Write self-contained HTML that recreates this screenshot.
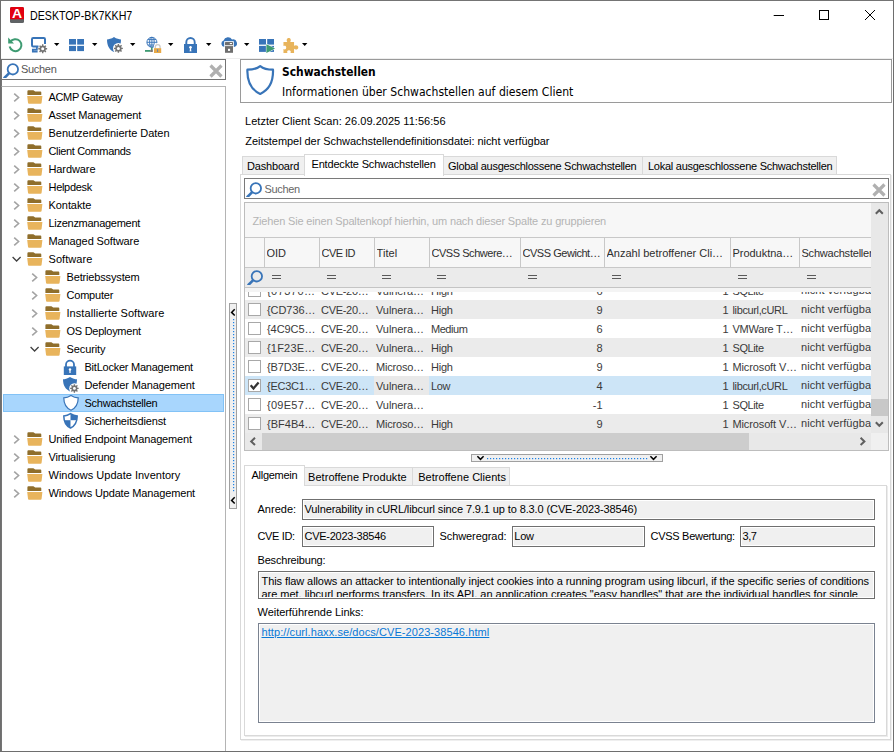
<!DOCTYPE html>
<html lang="de">
<head>
<meta charset="utf-8">
<title>DESKTOP-BK7KKH7</title>
<style>
*{box-sizing:border-box;margin:0;padding:0}
html,body{width:894px;height:752px;overflow:hidden;background:#fff}
body{font-family:"Liberation Sans","DejaVu Sans",sans-serif;font-size:11px;color:#000;position:relative}
.abs{position:absolute}
.t{position:absolute;white-space:nowrap;line-height:14px;height:14px}
#win{position:absolute;left:0;top:0;width:894px;height:752px;border:1px solid #6e6e6e;border-top-color:#747474;z-index:10;pointer-events:none}
svg{position:absolute;overflow:visible}
.t.c{color:#3a3a3a}
.fld{border:1px solid #6f6f6f;background:#f0f0f0;box-shadow:inset 0 0 0 1px #fff}
</style>
</head>
<body>
<div id="win"></div>

<!-- title bar -->
<svg style="left:10px;top:7px" width="14" height="16" viewBox="0 0 14 16">
  <rect x="0" y="0" width="14" height="15.9" rx="1.5" fill="#5f6365"/>
  <path d="M0 1.5A1.5 1.5 0 0 1 1.5 0H12.5A1.5 1.5 0 0 1 14 1.5V12.3H0Z" fill="#e2000f"/>
  <text x="7" y="11.2" transform="translate(7 0) scale(1.12 1) translate(-7 0)" font-family="Liberation Sans, sans-serif" font-weight="bold" font-size="12.5" text-anchor="middle" fill="#fff">A</text>
</svg>
<div class="t" id="title" style="left:30px;top:8px;font-size:12px;line-height:16px;height:16px;transform:scaleX(0.888);transform-origin:0 0">DESKTOP-BK7KKH7</div>
<svg style="left:773px;top:10px" width="110" height="12" viewBox="0 0 110 12" fill="none" stroke="#000" stroke-width="1">
  <path d="M0.7 5.5H11"/>
  <rect x="46.5" y="0.5" width="9" height="9"/>
  <path d="M92 0L102 10M102 0L92 10"/>
</svg>

<!-- toolbar -->
<div class="abs" style="left:1px;top:58px;width:892px;height:1px;background:#eeeeee"></div>
<svg style="left:7px;top:36.3px" width="17" height="17" viewBox="0 0 17 17" ><path d="M3.2 6.2A6 6 0 1 1 2.6 10.6" fill="none" stroke="#3e9b72" stroke-width="2"/><path d="M1.2 1.6V7.4H7Z" fill="#3e9b72"/></svg>
<svg style="left:31px;top:36px" width="18" height="18" viewBox="0 0 18 18" ><path d="M14 8V3.2A1.2 1.2 0 0 0 12.8 2H2.2A1.2 1.2 0 0 0 1 3.2V9.3A1.2 1.2 0 0 0 2.2 10.5H7.5" fill="none" stroke="#3874b8" stroke-width="2"/><path d="M5.9 10.5V13.6H1.8V15.7H6.6" fill="none" stroke="#3874b8" stroke-width="1.7"/><path d="M11.00 8.36L12.40 8.36L12.46 9.65L13.39 10.04L14.35 9.16L15.34 10.15L14.46 11.11L14.85 12.04L16.14 12.10L16.14 13.50L14.85 13.56L14.46 14.49L15.34 15.45L14.35 16.44L13.39 15.56L12.46 15.95L12.40 17.24L11.00 17.24L10.94 15.95L10.01 15.56L9.05 16.44L8.06 15.45L8.94 14.49L8.55 13.56L7.26 13.50L7.26 12.10L8.55 12.04L8.94 11.11L8.06 10.15L9.05 9.16L10.01 10.04L10.94 9.65Z" fill="#737373"/><circle cx="11.7" cy="12.8" r="1.5" fill="#fff"/></svg>
<svg style="left:53.8px;top:43px" width="6" height="4" viewBox="0 0 6 4" ><path d="M0 0H5.4L2.7 3.1Z" fill="#000"/></svg>
<svg style="left:69px;top:39px" width="16" height="14" viewBox="0 0 16 14" ><g fill="#3874b8"><rect x="0" y="0" width="7" height="5.6"/><rect x="8.2" y="0" width="6.8" height="5.6"/><rect x="0" y="6.9" width="7" height="5.2"/><rect x="8.2" y="6.9" width="6.8" height="5.2"/></g></svg>
<svg style="left:91.8px;top:43px" width="6" height="4" viewBox="0 0 6 4" ><path d="M0 0H5.4L2.7 3.1Z" fill="#000"/></svg>
<svg style="left:107px;top:37px" width="18" height="17" viewBox="0 0 18 17" ><path d="M7.0 0 C4.48 1.80 1.68 2.40 0 2.40 C0 9.30 2.80 12.90 7.0 15 C11.20 12.90 14 9.30 14 2.40 C12.32 2.40 9.52 1.80 7.0 0Z" fill="#3874b8"/><circle cx="11.4" cy="11.4" r="5.40" fill="#fff"/><path d="M10.70 6.96L12.10 6.96L12.16 8.25L13.09 8.64L14.05 7.76L15.04 8.75L14.16 9.71L14.55 10.64L15.84 10.70L15.84 12.10L14.55 12.16L14.16 13.09L15.04 14.05L14.05 15.04L13.09 14.16L12.16 14.55L12.10 15.84L10.70 15.84L10.64 14.55L9.71 14.16L8.75 15.04L7.76 14.05L8.64 13.09L8.25 12.16L6.96 12.10L6.96 10.70L8.25 10.64L8.64 9.71L7.76 8.75L8.75 7.76L9.71 8.64L10.64 8.25Z" fill="#737373"/><circle cx="11.4" cy="11.4" r="1.5" fill="#fff"/></svg>
<svg style="left:129.8px;top:43px" width="6" height="4" viewBox="0 0 6 4" ><path d="M0 0H5.4L2.7 3.1Z" fill="#000"/></svg>
<svg style="left:144px;top:36px" width="19" height="18" viewBox="0 0 19 18" ><g fill="none" stroke="#3874b8" stroke-width="0.95"><circle cx="7.9" cy="6.3" r="5"/><ellipse cx="7.9" cy="6.3" rx="2.3" ry="5"/><path d="M7.9 1.3V11.3M2.9 6.3H12.9M3.8 3.6H12M3.8 9H12"/></g><rect x="7" y="11.5" width="1.6" height="3" fill="#3e9b72"/><rect x="1" y="14" width="5.2" height="1.8" fill="#3e9b72"/><rect x="6.2" y="13.8" width="2.6" height="2.2" fill="#777"/><path d="M11.3 12.6V11A2.4 2.4 0 0 1 16.1 11V12.6" fill="none" stroke="#fff" stroke-width="3"/><path d="M11.3 12.6V11A2.4 2.4 0 0 1 16.1 11V12.6" fill="none" stroke="#c9c9c9" stroke-width="1.3"/><rect x="10" y="12.2" width="7.2" height="4.8" fill="#e8a947"/><rect x="13.2" y="13.2" width="0.9" height="2.8" fill="#5a7fb0"/></svg>
<svg style="left:167.8px;top:43px" width="6" height="4" viewBox="0 0 6 4" ><path d="M0 0H5.4L2.7 3.1Z" fill="#000"/></svg>
<svg style="left:184px;top:37px" width="14" height="17" viewBox="0 0 14 17" ><g transform="scale(1.0)"><path d="M2.3 8V5.2A4.2 4.2 0 0 1 10.7 5.2V8" fill="none" stroke="#3874b8" stroke-width="1.9"/><rect x="0" y="7" width="13" height="9" fill="#3874b8"/><circle cx="6.5" cy="10.3" r="1.25" fill="#fff"/><rect x="5.85" y="10.3" width="1.3" height="3.8" fill="#fff"/><path d="M5.3 14.2H7.7L6.5 12.8Z" fill="#fff"/></g></svg>
<svg style="left:205.8px;top:43px" width="6" height="4" viewBox="0 0 6 4" ><path d="M0 0H5.4L2.7 3.1Z" fill="#000"/></svg>
<svg style="left:220px;top:36px" width="19" height="18" viewBox="0 0 19 18" ><path d="M4.3 11A3.3 3.3 0 0 1 3.6 4.6A4.6 4.6 0 0 1 12 3.6A3.7 3.7 0 0 1 14.2 11Z" fill="#3874b8"/><rect x="4.2" y="5.2" width="9.6" height="12" fill="#fff"/><rect x="5" y="6" width="8" height="3.2" rx="0.5" fill="#6e6e6e"/><rect x="9.8" y="7" width="2.2" height="1.1" fill="#fff"/><rect x="5" y="10.1" width="8" height="6.7" fill="#6e6e6e"/><rect x="8" y="12.8" width="2.1" height="2.1" fill="#fff"/></svg>
<svg style="left:243.8px;top:43px" width="6" height="4" viewBox="0 0 6 4" ><path d="M0 0H5.4L2.7 3.1Z" fill="#000"/></svg>
<svg style="left:259px;top:39px" width="16" height="14" viewBox="0 0 16 14" ><g fill="#3874b8"><rect x="0" y="0" width="7" height="5.6"/><rect x="8.2" y="0" width="6.8" height="5.6"/><rect x="0" y="6.9" width="7" height="6"/><rect x="8.2" y="6.9" width="6.8" height="6"/></g></svg>
<svg style="left:266px;top:44px" width="10" height="10" viewBox="0 0 10 10" ><path d="M0.4 0.2L9 4.6L0.4 9Z" fill="#3e9b72" stroke="#fff" stroke-width="0.9" paint-order="stroke"/></svg>
<svg style="left:283px;top:37px" width="17" height="16" viewBox="0 0 17 16" ><path transform="translate(-0.6,0.2) scale(1.06)" d="M1 4.6H4.6C3.6 3 4 0.8 6 0.8C8 0.8 8.4 3 7.4 4.6H11V8.1C12.6 7.1 15 7.6 15 9.6C15 11.6 12.6 12 11 11V15H7.6C8.4 13.6 7.8 12.3 6.2 12.3C4.6 12.3 4 13.6 4.8 15H1V11.2C2.4 12 3.6 11.4 3.6 9.8C3.6 8.2 2.4 7.6 1 8.4Z" fill="#e8b45c"/></svg>
<svg style="left:301.7px;top:43px" width="6" height="4" viewBox="0 0 6 4" ><path d="M0 0H5.4L2.7 3.1Z" fill="#000"/></svg>

<!-- left search -->
<div class="abs" id="lsearch" style="left:1px;top:59px;width:225px;height:21px;border:1px solid #747474;background:#fff"></div>
<div class="t" style="left:21px;top:62px;color:#555;letter-spacing:-0.3px">Suchen</div>

<!-- tree -->
<div class="abs" id="treebox" style="left:1px;top:86px;width:225px;height:666px;border:1px solid #b4b4b4;border-left-color:#747474;border-bottom:none;background:#fff"></div>
<div class="abs" style="left:1px;top:80px;width:1px;height:6px;background:#747474"></div>
<svg style="left:13px;top:93px" width="8" height="9" viewBox="0 0 8 9" ><path d="M1.2 0.6L5.6 4.5L1.2 8.4" fill="none" stroke="#a3a3a3" stroke-width="1.6"/></svg>
<svg style="left:27px;top:90px" width="16" height="14" viewBox="0 0 16 14" ><path d="M0.4 1.2A1 1 0 0 1 1.4 0.2H6.4L8.2 1.6H13.4A0.9 0.9 0 0 1 14.3 2.5V5H0.4Z" fill="#8f6e2b"/><path d="M0.2 5.9H15.4L14.6 12.8A1 1 0 0 1 13.6 13.7H2A1 1 0 0 1 1 12.8Z" fill="#e8b45c"/></svg>
<div class="t" style="left:48.5px;top:90px;letter-spacing:-0.339px">ACMP Gateway</div>
<svg style="left:13px;top:111px" width="8" height="9" viewBox="0 0 8 9" ><path d="M1.2 0.6L5.6 4.5L1.2 8.4" fill="none" stroke="#a3a3a3" stroke-width="1.6"/></svg>
<svg style="left:27px;top:108px" width="16" height="14" viewBox="0 0 16 14" ><path d="M0.4 1.2A1 1 0 0 1 1.4 0.2H6.4L8.2 1.6H13.4A0.9 0.9 0 0 1 14.3 2.5V5H0.4Z" fill="#8f6e2b"/><path d="M0.2 5.9H15.4L14.6 12.8A1 1 0 0 1 13.6 13.7H2A1 1 0 0 1 1 12.8Z" fill="#e8b45c"/></svg>
<div class="t" style="left:48.5px;top:108px;letter-spacing:-0.136px">Asset Management</div>
<svg style="left:13px;top:129px" width="8" height="9" viewBox="0 0 8 9" ><path d="M1.2 0.6L5.6 4.5L1.2 8.4" fill="none" stroke="#a3a3a3" stroke-width="1.6"/></svg>
<svg style="left:27px;top:126px" width="16" height="14" viewBox="0 0 16 14" ><path d="M0.4 1.2A1 1 0 0 1 1.4 0.2H6.4L8.2 1.6H13.4A0.9 0.9 0 0 1 14.3 2.5V5H0.4Z" fill="#8f6e2b"/><path d="M0.2 5.9H15.4L14.6 12.8A1 1 0 0 1 13.6 13.7H2A1 1 0 0 1 1 12.8Z" fill="#e8b45c"/></svg>
<div class="t" style="left:48.5px;top:126px;letter-spacing:-0.029px">Benutzerdefinierte Daten</div>
<svg style="left:13px;top:147px" width="8" height="9" viewBox="0 0 8 9" ><path d="M1.2 0.6L5.6 4.5L1.2 8.4" fill="none" stroke="#a3a3a3" stroke-width="1.6"/></svg>
<svg style="left:27px;top:144px" width="16" height="14" viewBox="0 0 16 14" ><path d="M0.4 1.2A1 1 0 0 1 1.4 0.2H6.4L8.2 1.6H13.4A0.9 0.9 0 0 1 14.3 2.5V5H0.4Z" fill="#8f6e2b"/><path d="M0.2 5.9H15.4L14.6 12.8A1 1 0 0 1 13.6 13.7H2A1 1 0 0 1 1 12.8Z" fill="#e8b45c"/></svg>
<div class="t" style="left:48.5px;top:144px;letter-spacing:-0.355px">Client Commands</div>
<svg style="left:13px;top:165px" width="8" height="9" viewBox="0 0 8 9" ><path d="M1.2 0.6L5.6 4.5L1.2 8.4" fill="none" stroke="#a3a3a3" stroke-width="1.6"/></svg>
<svg style="left:27px;top:162px" width="16" height="14" viewBox="0 0 16 14" ><path d="M0.4 1.2A1 1 0 0 1 1.4 0.2H6.4L8.2 1.6H13.4A0.9 0.9 0 0 1 14.3 2.5V5H0.4Z" fill="#8f6e2b"/><path d="M0.2 5.9H15.4L14.6 12.8A1 1 0 0 1 13.6 13.7H2A1 1 0 0 1 1 12.8Z" fill="#e8b45c"/></svg>
<div class="t" style="left:48.5px;top:162px;letter-spacing:-0.098px">Hardware</div>
<svg style="left:13px;top:183px" width="8" height="9" viewBox="0 0 8 9" ><path d="M1.2 0.6L5.6 4.5L1.2 8.4" fill="none" stroke="#a3a3a3" stroke-width="1.6"/></svg>
<svg style="left:27px;top:180px" width="16" height="14" viewBox="0 0 16 14" ><path d="M0.4 1.2A1 1 0 0 1 1.4 0.2H6.4L8.2 1.6H13.4A0.9 0.9 0 0 1 14.3 2.5V5H0.4Z" fill="#8f6e2b"/><path d="M0.2 5.9H15.4L14.6 12.8A1 1 0 0 1 13.6 13.7H2A1 1 0 0 1 1 12.8Z" fill="#e8b45c"/></svg>
<div class="t" style="left:48.5px;top:180px;letter-spacing:-0.307px">Helpdesk</div>
<svg style="left:13px;top:201px" width="8" height="9" viewBox="0 0 8 9" ><path d="M1.2 0.6L5.6 4.5L1.2 8.4" fill="none" stroke="#a3a3a3" stroke-width="1.6"/></svg>
<svg style="left:27px;top:198px" width="16" height="14" viewBox="0 0 16 14" ><path d="M0.4 1.2A1 1 0 0 1 1.4 0.2H6.4L8.2 1.6H13.4A0.9 0.9 0 0 1 14.3 2.5V5H0.4Z" fill="#8f6e2b"/><path d="M0.2 5.9H15.4L14.6 12.8A1 1 0 0 1 13.6 13.7H2A1 1 0 0 1 1 12.8Z" fill="#e8b45c"/></svg>
<div class="t" style="left:48.5px;top:198px;letter-spacing:-0.065px">Kontakte</div>
<svg style="left:13px;top:219px" width="8" height="9" viewBox="0 0 8 9" ><path d="M1.2 0.6L5.6 4.5L1.2 8.4" fill="none" stroke="#a3a3a3" stroke-width="1.6"/></svg>
<svg style="left:27px;top:216px" width="16" height="14" viewBox="0 0 16 14" ><path d="M0.4 1.2A1 1 0 0 1 1.4 0.2H6.4L8.2 1.6H13.4A0.9 0.9 0 0 1 14.3 2.5V5H0.4Z" fill="#8f6e2b"/><path d="M0.2 5.9H15.4L14.6 12.8A1 1 0 0 1 13.6 13.7H2A1 1 0 0 1 1 12.8Z" fill="#e8b45c"/></svg>
<div class="t" style="left:48.5px;top:216px;letter-spacing:-0.282px">Lizenzmanagement</div>
<svg style="left:13px;top:237px" width="8" height="9" viewBox="0 0 8 9" ><path d="M1.2 0.6L5.6 4.5L1.2 8.4" fill="none" stroke="#a3a3a3" stroke-width="1.6"/></svg>
<svg style="left:27px;top:234px" width="16" height="14" viewBox="0 0 16 14" ><path d="M0.4 1.2A1 1 0 0 1 1.4 0.2H6.4L8.2 1.6H13.4A0.9 0.9 0 0 1 14.3 2.5V5H0.4Z" fill="#8f6e2b"/><path d="M0.2 5.9H15.4L14.6 12.8A1 1 0 0 1 13.6 13.7H2A1 1 0 0 1 1 12.8Z" fill="#e8b45c"/></svg>
<div class="t" style="left:48.5px;top:234px;letter-spacing:-0.103px">Managed Software</div>
<svg style="left:12px;top:256px" width="10" height="7" viewBox="0 0 10 7" ><path d="M0.6 1L4.6 5L8.6 1" fill="none" stroke="#404040" stroke-width="1.3"/></svg>
<svg style="left:27px;top:252px" width="16" height="14" viewBox="0 0 16 14" ><path d="M0.4 1.2A1 1 0 0 1 1.4 0.2H6.4L8.2 1.6H13.4A0.9 0.9 0 0 1 14.3 2.5V5H0.4Z" fill="#8f6e2b"/><path d="M0.2 5.9H15.4L14.6 12.8A1 1 0 0 1 13.6 13.7H2A1 1 0 0 1 1 12.8Z" fill="#e8b45c"/></svg>
<div class="t" style="left:48.5px;top:252px;letter-spacing:0.072px">Software</div>
<svg style="left:31px;top:273px" width="8" height="9" viewBox="0 0 8 9" ><path d="M1.2 0.6L5.6 4.5L1.2 8.4" fill="none" stroke="#a3a3a3" stroke-width="1.6"/></svg>
<svg style="left:45px;top:270px" width="16" height="14" viewBox="0 0 16 14" ><path d="M0.4 1.2A1 1 0 0 1 1.4 0.2H6.4L8.2 1.6H13.4A0.9 0.9 0 0 1 14.3 2.5V5H0.4Z" fill="#8f6e2b"/><path d="M0.2 5.9H15.4L14.6 12.8A1 1 0 0 1 13.6 13.7H2A1 1 0 0 1 1 12.8Z" fill="#e8b45c"/></svg>
<div class="t" style="left:66.5px;top:270px;letter-spacing:-0.157px">Betriebssystem</div>
<svg style="left:31px;top:291px" width="8" height="9" viewBox="0 0 8 9" ><path d="M1.2 0.6L5.6 4.5L1.2 8.4" fill="none" stroke="#a3a3a3" stroke-width="1.6"/></svg>
<svg style="left:45px;top:288px" width="16" height="14" viewBox="0 0 16 14" ><path d="M0.4 1.2A1 1 0 0 1 1.4 0.2H6.4L8.2 1.6H13.4A0.9 0.9 0 0 1 14.3 2.5V5H0.4Z" fill="#8f6e2b"/><path d="M0.2 5.9H15.4L14.6 12.8A1 1 0 0 1 13.6 13.7H2A1 1 0 0 1 1 12.8Z" fill="#e8b45c"/></svg>
<div class="t" style="left:66.5px;top:288px;letter-spacing:-0.2px">Computer</div>
<svg style="left:31px;top:309px" width="8" height="9" viewBox="0 0 8 9" ><path d="M1.2 0.6L5.6 4.5L1.2 8.4" fill="none" stroke="#a3a3a3" stroke-width="1.6"/></svg>
<svg style="left:45px;top:306px" width="16" height="14" viewBox="0 0 16 14" ><path d="M0.4 1.2A1 1 0 0 1 1.4 0.2H6.4L8.2 1.6H13.4A0.9 0.9 0 0 1 14.3 2.5V5H0.4Z" fill="#8f6e2b"/><path d="M0.2 5.9H15.4L14.6 12.8A1 1 0 0 1 13.6 13.7H2A1 1 0 0 1 1 12.8Z" fill="#e8b45c"/></svg>
<div class="t" style="left:66.5px;top:306px;letter-spacing:0.061px">Installierte Software</div>
<svg style="left:31px;top:327px" width="8" height="9" viewBox="0 0 8 9" ><path d="M1.2 0.6L5.6 4.5L1.2 8.4" fill="none" stroke="#a3a3a3" stroke-width="1.6"/></svg>
<svg style="left:45px;top:324px" width="16" height="14" viewBox="0 0 16 14" ><path d="M0.4 1.2A1 1 0 0 1 1.4 0.2H6.4L8.2 1.6H13.4A0.9 0.9 0 0 1 14.3 2.5V5H0.4Z" fill="#8f6e2b"/><path d="M0.2 5.9H15.4L14.6 12.8A1 1 0 0 1 13.6 13.7H2A1 1 0 0 1 1 12.8Z" fill="#e8b45c"/></svg>
<div class="t" style="left:66.5px;top:324px;letter-spacing:-0.258px">OS Deployment</div>
<svg style="left:30px;top:346px" width="10" height="7" viewBox="0 0 10 7" ><path d="M0.6 1L4.6 5L8.6 1" fill="none" stroke="#404040" stroke-width="1.3"/></svg>
<svg style="left:45px;top:342px" width="16" height="14" viewBox="0 0 16 14" ><path d="M0.4 1.2A1 1 0 0 1 1.4 0.2H6.4L8.2 1.6H13.4A0.9 0.9 0 0 1 14.3 2.5V5H0.4Z" fill="#8f6e2b"/><path d="M0.2 5.9H15.4L14.6 12.8A1 1 0 0 1 13.6 13.7H2A1 1 0 0 1 1 12.8Z" fill="#e8b45c"/></svg>
<div class="t" style="left:66.5px;top:342px;letter-spacing:-0.106px">Security</div>
<svg style="left:63px;top:359px" width="15" height="17" viewBox="0 0 15 17" ><path d="M3 8V5.6A4 4 0 0 1 11 5.6V8" fill="none" stroke="#3874b8" stroke-width="1.8"/><rect x="0.8" y="7.4" width="12.4" height="8.6" fill="#3874b8"/><circle cx="7" cy="10.4" r="1.2" fill="#fff"/><rect x="6.4" y="10.4" width="1.2" height="3.6" fill="#fff"/></svg>
<div class="t" style="left:84.5px;top:360px;letter-spacing:-0.236px">BitLocker Management</div>
<svg style="left:63px;top:377px" width="17" height="17" viewBox="0 0 17 17" ><path d="M7.0 0 C4.48 1.74 1.68 2.32 0 2.32 C0 8.99 2.80 12.47 7.0 14.5 C11.20 12.47 14 8.99 14 2.32 C12.32 2.32 9.52 1.74 7.0 0Z" fill="#3874b8"/><circle cx="11.4" cy="11.4" r="5.20" fill="#fff"/><path d="M10.73 7.15L12.07 7.15L12.12 8.39L13.02 8.76L13.93 7.92L14.88 8.87L14.04 9.78L14.41 10.68L15.65 10.73L15.65 12.07L14.41 12.12L14.04 13.02L14.88 13.93L13.93 14.88L13.02 14.04L12.12 14.41L12.07 15.65L10.73 15.65L10.68 14.41L9.78 14.04L8.87 14.88L7.92 13.93L8.76 13.02L8.39 12.12L7.15 12.07L7.15 10.73L8.39 10.68L8.76 9.78L7.92 8.87L8.87 7.92L9.78 8.76L10.68 8.39Z" fill="#737373"/><circle cx="11.4" cy="11.4" r="1.4" fill="#fff"/></svg>
<div class="t" style="left:84.5px;top:378px;letter-spacing:-0.117px">Defender Management</div>
<div class="abs" style="left:3px;top:394px;width:221px;height:18px;background:#a8d6fd;border:1px solid #82c2f6"></div>
<svg style="left:63px;top:395px" width="16" height="16" viewBox="0 0 16 16" ><path d="M8.0 0.6 C5.41 2.35 2.53 2.94 0.8 2.94 C0.8 9.65 3.68 13.16 8.0 15.2 C12.32 13.16 15.200000000000001 9.65 15.200000000000001 2.94 C13.47 2.94 10.59 2.35 8.0 0.6Z" fill="#fff" stroke="#3874b8" stroke-width="1.2"/></svg>
<div class="t" style="left:84.5px;top:396px;letter-spacing:-0.253px">Schwachstellen</div>
<svg style="left:63px;top:413px" width="16" height="16" viewBox="0 0 16 16" ><clipPath id="svc"><path d="M7.5 0.6 C5.09 2.33 2.41 2.90 0.8 2.90 C0.8 9.53 3.48 12.98 7.5 15.0 C11.52 12.98 14.200000000000001 9.53 14.200000000000001 2.90 C12.59 2.90 9.91 2.33 7.5 0.6Z"/></clipPath><path d="M7.5 0.6 C5.09 2.33 2.41 2.90 0.8 2.90 C0.8 9.53 3.48 12.98 7.5 15.0 C11.52 12.98 14.200000000000001 9.53 14.200000000000001 2.90 C12.59 2.90 9.91 2.33 7.5 0.6Z" fill="#fff" stroke="#3874b8" stroke-width="1.5"/><g clip-path="url(#svc)" fill="#3874b8"><rect x="7.5" y="0" width="8" height="7.2"/><rect x="0" y="7.2" width="7.5" height="9"/></g></svg>
<div class="t" style="left:84.5px;top:414px;letter-spacing:-0.134px">Sicherheitsdienst</div>
<svg style="left:13px;top:435px" width="8" height="9" viewBox="0 0 8 9" ><path d="M1.2 0.6L5.6 4.5L1.2 8.4" fill="none" stroke="#a3a3a3" stroke-width="1.6"/></svg>
<svg style="left:27px;top:432px" width="16" height="14" viewBox="0 0 16 14" ><path d="M0.4 1.2A1 1 0 0 1 1.4 0.2H6.4L8.2 1.6H13.4A0.9 0.9 0 0 1 14.3 2.5V5H0.4Z" fill="#8f6e2b"/><path d="M0.2 5.9H15.4L14.6 12.8A1 1 0 0 1 13.6 13.7H2A1 1 0 0 1 1 12.8Z" fill="#e8b45c"/></svg>
<div class="t" style="left:48.5px;top:432px;letter-spacing:-0.173px">Unified Endpoint Management</div>
<svg style="left:13px;top:453px" width="8" height="9" viewBox="0 0 8 9" ><path d="M1.2 0.6L5.6 4.5L1.2 8.4" fill="none" stroke="#a3a3a3" stroke-width="1.6"/></svg>
<svg style="left:27px;top:450px" width="16" height="14" viewBox="0 0 16 14" ><path d="M0.4 1.2A1 1 0 0 1 1.4 0.2H6.4L8.2 1.6H13.4A0.9 0.9 0 0 1 14.3 2.5V5H0.4Z" fill="#8f6e2b"/><path d="M0.2 5.9H15.4L14.6 12.8A1 1 0 0 1 13.6 13.7H2A1 1 0 0 1 1 12.8Z" fill="#e8b45c"/></svg>
<div class="t" style="left:48.5px;top:450px;letter-spacing:-0.181px">Virtualisierung</div>
<svg style="left:13px;top:471px" width="8" height="9" viewBox="0 0 8 9" ><path d="M1.2 0.6L5.6 4.5L1.2 8.4" fill="none" stroke="#a3a3a3" stroke-width="1.6"/></svg>
<svg style="left:27px;top:468px" width="16" height="14" viewBox="0 0 16 14" ><path d="M0.4 1.2A1 1 0 0 1 1.4 0.2H6.4L8.2 1.6H13.4A0.9 0.9 0 0 1 14.3 2.5V5H0.4Z" fill="#8f6e2b"/><path d="M0.2 5.9H15.4L14.6 12.8A1 1 0 0 1 13.6 13.7H2A1 1 0 0 1 1 12.8Z" fill="#e8b45c"/></svg>
<div class="t" style="left:48.5px;top:468px;letter-spacing:0.014px">Windows Update Inventory</div>
<svg style="left:13px;top:489px" width="8" height="9" viewBox="0 0 8 9" ><path d="M1.2 0.6L5.6 4.5L1.2 8.4" fill="none" stroke="#a3a3a3" stroke-width="1.6"/></svg>
<svg style="left:27px;top:486px" width="16" height="14" viewBox="0 0 16 14" ><path d="M0.4 1.2A1 1 0 0 1 1.4 0.2H6.4L8.2 1.6H13.4A0.9 0.9 0 0 1 14.3 2.5V5H0.4Z" fill="#8f6e2b"/><path d="M0.2 5.9H15.4L14.6 12.8A1 1 0 0 1 13.6 13.7H2A1 1 0 0 1 1 12.8Z" fill="#e8b45c"/></svg>
<div class="t" style="left:48.5px;top:486px;letter-spacing:-0.157px">Windows Update Management</div>

<!-- right -->
<svg style="left:3px;top:63px" width="17" height="16" viewBox="0 0 17 16" ><g transform="scale(1.0)"><circle cx="9.85" cy="6.3" r="5.2" fill="none" stroke="#3874b8" stroke-width="1.8"/><path d="M5.3 9.3L7.1 11.1L3.2 14.9H0.2V14.2Z" fill="#3874b8"/></g></svg>
<svg style="left:209.1px;top:64px" width="14" height="14" viewBox="0 0 14 14" ><path d="M1.5 1.5L12.5 12.5M12.5 1.5L1.5 12.5" stroke="#b0b0b0" stroke-width="3.2"/></svg>
<div class="abs" style="left:229px;top:303px;width:8px;height:206px;border:1px solid #a0a0a0;background:#f0f0f0"></div>
<svg style="left:232.8px;top:318.9px" width="2" height="175" viewBox="0 0 2 175" ><g fill="#1e82e6"><rect x="0" y="0" width="1.2" height="1.2"/><rect x="0" y="3" width="1.2" height="1.2"/><rect x="0" y="6" width="1.2" height="1.2"/><rect x="0" y="9" width="1.2" height="1.2"/><rect x="0" y="12" width="1.2" height="1.2"/><rect x="0" y="15" width="1.2" height="1.2"/><rect x="0" y="18" width="1.2" height="1.2"/><rect x="0" y="21" width="1.2" height="1.2"/><rect x="0" y="24" width="1.2" height="1.2"/><rect x="0" y="27" width="1.2" height="1.2"/><rect x="0" y="30" width="1.2" height="1.2"/><rect x="0" y="33" width="1.2" height="1.2"/><rect x="0" y="36" width="1.2" height="1.2"/><rect x="0" y="39" width="1.2" height="1.2"/><rect x="0" y="42" width="1.2" height="1.2"/><rect x="0" y="45" width="1.2" height="1.2"/><rect x="0" y="48" width="1.2" height="1.2"/><rect x="0" y="51" width="1.2" height="1.2"/><rect x="0" y="54" width="1.2" height="1.2"/><rect x="0" y="57" width="1.2" height="1.2"/><rect x="0" y="60" width="1.2" height="1.2"/><rect x="0" y="63" width="1.2" height="1.2"/><rect x="0" y="66" width="1.2" height="1.2"/><rect x="0" y="69" width="1.2" height="1.2"/><rect x="0" y="72" width="1.2" height="1.2"/><rect x="0" y="75" width="1.2" height="1.2"/><rect x="0" y="78" width="1.2" height="1.2"/><rect x="0" y="81" width="1.2" height="1.2"/><rect x="0" y="84" width="1.2" height="1.2"/><rect x="0" y="87" width="1.2" height="1.2"/><rect x="0" y="90" width="1.2" height="1.2"/><rect x="0" y="93" width="1.2" height="1.2"/><rect x="0" y="96" width="1.2" height="1.2"/><rect x="0" y="99" width="1.2" height="1.2"/><rect x="0" y="102" width="1.2" height="1.2"/><rect x="0" y="105" width="1.2" height="1.2"/><rect x="0" y="108" width="1.2" height="1.2"/><rect x="0" y="111" width="1.2" height="1.2"/><rect x="0" y="114" width="1.2" height="1.2"/><rect x="0" y="117" width="1.2" height="1.2"/><rect x="0" y="120" width="1.2" height="1.2"/><rect x="0" y="123" width="1.2" height="1.2"/><rect x="0" y="126" width="1.2" height="1.2"/><rect x="0" y="129" width="1.2" height="1.2"/><rect x="0" y="132" width="1.2" height="1.2"/><rect x="0" y="135" width="1.2" height="1.2"/><rect x="0" y="138" width="1.2" height="1.2"/><rect x="0" y="141" width="1.2" height="1.2"/><rect x="0" y="144" width="1.2" height="1.2"/><rect x="0" y="147" width="1.2" height="1.2"/><rect x="0" y="150" width="1.2" height="1.2"/><rect x="0" y="153" width="1.2" height="1.2"/><rect x="0" y="156" width="1.2" height="1.2"/><rect x="0" y="159" width="1.2" height="1.2"/><rect x="0" y="162" width="1.2" height="1.2"/><rect x="0" y="165" width="1.2" height="1.2"/><rect x="0" y="168" width="1.2" height="1.2"/><rect x="0" y="171" width="1.2" height="1.2"/></g></svg>
<svg style="left:230px;top:308px" width="6" height="9" viewBox="0 0 6 9" ><path d="M4.7 1.3L1.6 4.4L4.7 7.5" fill="none" stroke="#000" stroke-width="1.5"/></svg>
<svg style="left:230px;top:496px" width="6" height="9" viewBox="0 0 6 9" ><path d="M4.7 1.3L1.6 4.4L4.7 7.5" fill="none" stroke="#000" stroke-width="1.5"/></svg>
<div class="abs" style="left:240px;top:59px;width:652px;height:44px;border:1px solid #9a9a9a;background:#fff"></div>
<svg style="left:246px;top:64px" width="29" height="32" viewBox="0 0 29 32" ><path d="M14.2 2.1C11.6 4.2 7.6 5.7 1.4 5.7C1 17 4.5 25.5 14.2 29.9C23.9 25.5 27.4 17 27 5.7C20.8 5.7 16.8 4.2 14.2 2.1Z" fill="none" stroke="#3874b8" stroke-width="2.2" stroke-linejoin="round"/></svg>
<div class="t" style="left:282px;top:65px;font:bold 12px 'DejaVu Sans','Liberation Sans',sans-serif;line-height:14px;transform:scaleX(0.8917);transform-origin:0 0">Schwachstellen</div>
<div class="t" style="left:282px;top:85px;font:12px 'DejaVu Sans','Liberation Sans',sans-serif;line-height:14px;transform:scaleX(0.9051);transform-origin:0 0">Informationen über Schwachstellen auf diesem Client</div>
<div class="t" style="left:245px;top:114px;;letter-spacing:0.038px">Letzter Client Scan: 26.09.2025 11:56:56</div>
<div class="t" style="left:245.3px;top:134px;;letter-spacing:-0.055px">Zeitstempel der Schwachstellendefinitionsdatei: nicht verfügbar</div>
<div class="abs" style="left:240px;top:174px;width:651px;height:566px;border:1px solid #d9d9d9;background:#fff;box-shadow:1px 1px 0 #efefef"></div>
<div class="abs" style="left:242px;top:156px;width:63px;height:19px;border:1px solid #d9d9d9;background:#f0f0f0"></div><div class="t" style="left:247px;top:159px;;letter-spacing:-0.181px">Dashboard</div>
<div class="abs" style="left:443px;top:156px;width:200px;height:19px;border:1px solid #d9d9d9;background:#f0f0f0"></div><div class="t" style="left:448px;top:159px;;letter-spacing:-0.296px">Global ausgeschlossene Schwachstellen</div>
<div class="abs" style="left:642px;top:156px;width:195px;height:19px;border:1px solid #d9d9d9;background:#f0f0f0"></div><div class="t" style="left:648px;top:159px;;letter-spacing:-0.262px">Lokal ausgeschlossene Schwachstellen</div>
<div class="abs" style="left:304px;top:154px;width:140px;height:22px;border:1px solid #d9d9d9;border-bottom:none;background:#fff"></div><div class="t" style="left:311.5px;top:157px;;letter-spacing:-0.18px">Entdeckte Schwachstellen</div>
<div class="abs" style="left:244px;top:178px;width:645px;height:21px;border:1px solid #7a7a7a;background:#fff"></div>
<svg style="left:246px;top:182px" width="17" height="16" viewBox="0 0 17 16" ><g transform="scale(1.0)"><circle cx="9.85" cy="6.3" r="5.2" fill="none" stroke="#3874b8" stroke-width="1.8"/><path d="M5.3 9.3L7.1 11.1L3.2 14.9H0.2V14.2Z" fill="#3874b8"/></g></svg>
<div class="t" style="left:264.5px;top:182px;color:#666;letter-spacing:-0.352px">Suchen</div>
<svg style="left:871.9px;top:182.9px" width="14" height="14" viewBox="0 0 14 14" ><path d="M1.5 1.5L12.5 12.5M12.5 1.5L1.5 12.5" stroke="#b0b0b0" stroke-width="3.2"/></svg>
<div class="abs" style="left:244px;top:202px;width:645px;height:249px;border:1px solid #bdbdbd;background:#fff"></div>
<div class="abs" style="left:245px;top:203px;width:626px;height:34px;background:#f7f7f7"></div>
<div class="t" style="left:252.5px;top:214px;color:#b4b4b4;letter-spacing:-0.166px">Ziehen Sie einen Spaltenkopf hierhin, um nach dieser Spalte zu gruppieren</div>
<div class="abs" style="left:245px;top:237px;width:626px;height:31px;background:#f7f7f7;border-top:1px solid #c8c8c8;border-bottom:1px solid #c8c8c8"></div>
<div class="abs" style="left:264px;top:238px;width:1px;height:29px;background:#c8c8c8"></div>
<div class="abs" style="left:319px;top:238px;width:1px;height:29px;background:#c8c8c8"></div>
<div class="abs" style="left:374px;top:238px;width:1px;height:29px;background:#c8c8c8"></div>
<div class="abs" style="left:429px;top:238px;width:1px;height:29px;background:#c8c8c8"></div>
<div class="abs" style="left:520px;top:238px;width:1px;height:29px;background:#c8c8c8"></div>
<div class="abs" style="left:604px;top:238px;width:1px;height:29px;background:#c8c8c8"></div>
<div class="abs" style="left:730px;top:238px;width:1px;height:29px;background:#c8c8c8"></div>
<div class="abs" style="left:799px;top:238px;width:1px;height:29px;background:#c8c8c8"></div>
<div class="t" style="left:266.5px;top:246px;width:52.5px;overflow:hidden;color:#2e2e2e;letter-spacing:-0.088px">OID</div>
<div class="t" style="left:321.5px;top:246px;width:52.5px;overflow:hidden;color:#2e2e2e;letter-spacing:-0.565px">CVE ID</div>
<div class="t" style="left:376.5px;top:246px;width:52.5px;overflow:hidden;color:#2e2e2e;letter-spacing:0.085px">Titel</div>
<div class="t" style="left:431.5px;top:246px;width:88.5px;overflow:hidden;color:#2e2e2e;letter-spacing:-0.455px">CVSS Schwere…</div>
<div class="t" style="left:522.5px;top:246px;width:81.5px;overflow:hidden;color:#2e2e2e;letter-spacing:-0.465px">CVSS Gewicht…</div>
<div class="t" style="left:606.5px;top:246px;width:123.5px;overflow:hidden;color:#2e2e2e;letter-spacing:0.0px">Anzahl betroffener Cli…</div>
<div class="t" style="left:732.5px;top:246px;width:66.5px;overflow:hidden;color:#2e2e2e;letter-spacing:-0.036px">Produktna…</div>
<div class="t" style="left:801.5px;top:246px;width:69.5px;overflow:hidden;color:#2e2e2e;letter-spacing:-0.217px">Schwachstellendefinition</div>
<div class="abs" style="left:245px;top:268px;width:626px;height:20px;background:#ebebeb;border-bottom:1px solid #c4c4c4"></div>
<svg style="left:247px;top:269.5px" width="17" height="16" viewBox="0 0 17 16" ><g transform="scale(1.0)"><circle cx="9.85" cy="6.3" r="5.2" fill="none" stroke="#3874b8" stroke-width="1.8"/><path d="M5.3 9.3L7.1 11.1L3.2 14.9H0.2V14.2Z" fill="#3874b8"/></g></svg>
<svg style="left:272px;top:275px" width="10" height="5" viewBox="0 0 10 5" ><path d="M0 0.5H9M0 3.5H9" stroke="#5a5a5a" stroke-width="1"/></svg>
<svg style="left:327px;top:275px" width="10" height="5" viewBox="0 0 10 5" ><path d="M0 0.5H9M0 3.5H9" stroke="#5a5a5a" stroke-width="1"/></svg>
<svg style="left:382px;top:275px" width="10" height="5" viewBox="0 0 10 5" ><path d="M0 0.5H9M0 3.5H9" stroke="#5a5a5a" stroke-width="1"/></svg>
<svg style="left:437px;top:275px" width="10" height="5" viewBox="0 0 10 5" ><path d="M0 0.5H9M0 3.5H9" stroke="#5a5a5a" stroke-width="1"/></svg>
<svg style="left:528px;top:275px" width="10" height="5" viewBox="0 0 10 5" ><path d="M0 0.5H9M0 3.5H9" stroke="#5a5a5a" stroke-width="1"/></svg>
<svg style="left:612px;top:275px" width="10" height="5" viewBox="0 0 10 5" ><path d="M0 0.5H9M0 3.5H9" stroke="#5a5a5a" stroke-width="1"/></svg>
<svg style="left:738px;top:275px" width="10" height="5" viewBox="0 0 10 5" ><path d="M0 0.5H9M0 3.5H9" stroke="#5a5a5a" stroke-width="1"/></svg>
<svg style="left:807px;top:275px" width="10" height="5" viewBox="0 0 10 5" ><path d="M0 0.5H9M0 3.5H9" stroke="#5a5a5a" stroke-width="1"/></svg>
<div class="abs" style="left:245px;top:288px;width:626px;height:4px;background:#f4f4f4"></div>
<div class="abs" id="rows" style="left:245px;top:292px;width:626px;height:141px;overflow:hidden"><div class="abs" style="left:0;top:-11px;width:626px;height:19px;background:#fff"><div class="abs" style="left:3px;top:3px;width:13px;height:13px;border:1px solid #a8a8a8;background:#fff"></div><div class="t c" style="left:22px;top:3px;letter-spacing:0.448px">{07370…</div><div class="t c" style="left:76px;top:3px;letter-spacing:-0.304px">CVE-20…</div><div class="t c" style="left:131px;top:3px;letter-spacing:-0.077px">Vulnera…</div><div class="t c" style="left:186px;top:3px;letter-spacing:-0.231px">High</div><div class="t c" style="right:268.5px;top:3px">6</div><div class="t c" style="right:142.5px;top:3px">1</div><div class="t c" style="left:487.5px;top:3px;letter-spacing:-0.407px">SQLite</div><div class="t c" style="left:556px;top:2px;letter-spacing:0.069px">nicht verfügbar</div></div><div class="abs" style="left:0;top:8px;width:626px;height:19px;background:#ebebeb"><div class="abs" style="left:3px;top:3px;width:13px;height:13px;border:1px solid #a8a8a8;background:#fff"></div><div class="t c" style="left:22px;top:3px;letter-spacing:-0.075px">{CD736…</div><div class="t c" style="left:76px;top:3px;letter-spacing:-0.304px">CVE-20…</div><div class="t c" style="left:131px;top:3px;letter-spacing:-0.077px">Vulnera…</div><div class="t c" style="left:186px;top:3px;letter-spacing:-0.231px">High</div><div class="t c" style="right:268.5px;top:3px">9</div><div class="t c" style="right:142.5px;top:3px">1</div><div class="t c" style="left:487.5px;top:3px;letter-spacing:-0.366px">libcurl,cURL</div><div class="t c" style="left:556px;top:2px;letter-spacing:0.069px">nicht verfügbar</div></div><div class="abs" style="left:0;top:27px;width:626px;height:19px;background:#fff"><div class="abs" style="left:3px;top:3px;width:13px;height:13px;border:1px solid #a8a8a8;background:#fff"></div><div class="t c" style="left:22px;top:3px;letter-spacing:-0.075px">{4C9C5…</div><div class="t c" style="left:76px;top:3px;letter-spacing:-0.304px">CVE-20…</div><div class="t c" style="left:131px;top:3px;letter-spacing:-0.077px">Vulnera…</div><div class="t c" style="left:186px;top:3px;letter-spacing:-0.454px">Medium</div><div class="t c" style="right:268.5px;top:3px">6</div><div class="t c" style="right:142.5px;top:3px">1</div><div class="t c" style="left:487.5px;top:3px;letter-spacing:-0.239px">VMWare T…</div><div class="t c" style="left:556px;top:2px;letter-spacing:0.069px">nicht verfügbar</div></div><div class="abs" style="left:0;top:46px;width:626px;height:19px;background:#ebebeb"><div class="abs" style="left:3px;top:3px;width:13px;height:13px;border:1px solid #a8a8a8;background:#fff"></div><div class="t c" style="left:22px;top:3px;letter-spacing:0.187px">{1F23E…</div><div class="t c" style="left:76px;top:3px;letter-spacing:-0.304px">CVE-20…</div><div class="t c" style="left:131px;top:3px;letter-spacing:-0.077px">Vulnera…</div><div class="t c" style="left:186px;top:3px;letter-spacing:-0.231px">High</div><div class="t c" style="right:268.5px;top:3px">8</div><div class="t c" style="right:142.5px;top:3px">1</div><div class="t c" style="left:487.5px;top:3px;letter-spacing:-0.407px">SQLite</div><div class="t c" style="left:556px;top:2px;letter-spacing:0.069px">nicht verfügbar</div></div><div class="abs" style="left:0;top:65px;width:626px;height:19px;background:#fff"><div class="abs" style="left:3px;top:3px;width:13px;height:13px;border:1px solid #a8a8a8;background:#fff"></div><div class="t c" style="left:22px;top:3px;letter-spacing:-0.162px">{B7D3E…</div><div class="t c" style="left:76px;top:3px;letter-spacing:-0.304px">CVE-20…</div><div class="t c" style="left:131px;top:3px;letter-spacing:-0.202px">Microso…</div><div class="t c" style="left:186px;top:3px;letter-spacing:-0.231px">High</div><div class="t c" style="right:268.5px;top:3px">9</div><div class="t c" style="right:142.5px;top:3px">1</div><div class="t c" style="left:487.5px;top:3px;letter-spacing:-0.126px">Microsoft V…</div><div class="t c" style="left:556px;top:2px;letter-spacing:0.069px">nicht verfügbar</div></div><div class="abs" style="left:0;top:84px;width:626px;height:19px;background:#cde5f7"><div class="abs" style="left:129px;top:0;width:55px;height:19px;background:#e9e9e9"></div><div class="abs" style="left:3px;top:3px;width:13px;height:13px;border:1px solid #a8a8a8;background:#fff"></div><svg style="left:4px;top:4px" width="11" height="11" viewBox="0 0 11 11"><path d="M1.7 5.3L4.5 8.4L9.6 2.6" fill="none" stroke="#343434" stroke-width="2.3"/></svg><div class="t c" style="left:22px;top:3px;letter-spacing:-0.249px">{EC3C1…</div><div class="t c" style="left:76px;top:3px;letter-spacing:-0.304px">CVE-20…</div><div class="t c" style="left:131px;top:3px;letter-spacing:-0.077px">Vulnera…</div><div class="t c" style="left:186px;top:3px;letter-spacing:-0.363px">Low</div><div class="t c" style="right:268.5px;top:3px">4</div><div class="t c" style="right:142.5px;top:3px">1</div><div class="t c" style="left:487.5px;top:3px;letter-spacing:-0.366px">libcurl,cURL</div><div class="t c" style="left:556px;top:2px;letter-spacing:0.069px">nicht verfügbar</div></div><div class="abs" style="left:0;top:103px;width:626px;height:19px;background:#fff"><div class="abs" style="left:3px;top:3px;width:13px;height:13px;border:1px solid #a8a8a8;background:#fff"></div><div class="t c" style="left:22px;top:3px;letter-spacing:0.274px">{09E57…</div><div class="t c" style="left:76px;top:3px;letter-spacing:-0.304px">CVE-20…</div><div class="t c" style="left:131px;top:3px;letter-spacing:-0.077px">Vulnera…</div><div class="t c" style="right:268.5px;top:3px">-1</div><div class="t c" style="right:142.5px;top:3px">1</div><div class="t c" style="left:487.5px;top:3px;letter-spacing:-0.407px">SQLite</div><div class="t c" style="left:556px;top:2px;letter-spacing:0.069px">nicht verfügbar</div></div><div class="abs" style="left:0;top:122px;width:626px;height:19px;background:#ebebeb"><div class="abs" style="left:3px;top:3px;width:13px;height:13px;border:1px solid #a8a8a8;background:#fff"></div><div class="t c" style="left:22px;top:3px;letter-spacing:0.012px">{BF4B4…</div><div class="t c" style="left:76px;top:3px;letter-spacing:-0.304px">CVE-20…</div><div class="t c" style="left:131px;top:3px;letter-spacing:-0.202px">Microso…</div><div class="t c" style="left:186px;top:3px;letter-spacing:-0.231px">High</div><div class="t c" style="right:268.5px;top:3px">9</div><div class="t c" style="right:142.5px;top:3px">1</div><div class="t c" style="left:487.5px;top:3px;letter-spacing:-0.126px">Microsoft V…</div><div class="t c" style="left:556px;top:2px;letter-spacing:0.069px">nicht verfügbar</div></div></div>
<div class="abs" style="left:871px;top:203px;width:17px;height:230px;background:#e8e8e8"></div>
<div class="abs" style="left:871px;top:399px;width:17px;height:17px;background:#c8c8c8"></div>
<svg style="left:875px;top:208px" width="9" height="7" viewBox="0 0 9 7" ><path d="M0.8 5.8L4.3 2.2L7.8 5.8" fill="none" stroke="#5f5f5f" stroke-width="2"/></svg>
<svg style="left:875px;top:421px" width="9" height="7" viewBox="0 0 9 7" ><path d="M0.8 1.2L4.3 4.8L7.8 1.2" fill="none" stroke="#5f5f5f" stroke-width="2"/></svg>
<div class="abs" style="left:245px;top:433px;width:626px;height:17px;background:#e8e8e8"></div>
<div class="abs" style="left:262px;top:433px;width:487px;height:17px;background:#cdcdcd"></div>
<div class="abs" style="left:871px;top:433px;width:17px;height:17px;background:#f0f0f0"></div>
<svg style="left:249px;top:437px" width="8" height="9" viewBox="0 0 8 9" ><path d="M6 0.8L2.2 4.4L6 8" fill="none" stroke="#5f5f5f" stroke-width="2"/></svg>
<svg style="left:859px;top:437px" width="8" height="9" viewBox="0 0 8 9" ><path d="M1.6 0.8L5.4 4.4L1.6 8" fill="none" stroke="#5f5f5f" stroke-width="2"/></svg>
<div class="abs" style="left:471px;top:454px;width:192px;height:8px;border:1px solid #a0a0a0;background:#f0f0f0"></div>
<svg style="left:487.3px;top:457.7px" width="162" height="2" viewBox="0 0 162 2" ><g fill="#1e82e6"><rect x="0" y="0" width="1.2" height="1.2"/><rect x="3" y="0" width="1.2" height="1.2"/><rect x="6" y="0" width="1.2" height="1.2"/><rect x="9" y="0" width="1.2" height="1.2"/><rect x="12" y="0" width="1.2" height="1.2"/><rect x="15" y="0" width="1.2" height="1.2"/><rect x="18" y="0" width="1.2" height="1.2"/><rect x="21" y="0" width="1.2" height="1.2"/><rect x="24" y="0" width="1.2" height="1.2"/><rect x="27" y="0" width="1.2" height="1.2"/><rect x="30" y="0" width="1.2" height="1.2"/><rect x="33" y="0" width="1.2" height="1.2"/><rect x="36" y="0" width="1.2" height="1.2"/><rect x="39" y="0" width="1.2" height="1.2"/><rect x="42" y="0" width="1.2" height="1.2"/><rect x="45" y="0" width="1.2" height="1.2"/><rect x="48" y="0" width="1.2" height="1.2"/><rect x="51" y="0" width="1.2" height="1.2"/><rect x="54" y="0" width="1.2" height="1.2"/><rect x="57" y="0" width="1.2" height="1.2"/><rect x="60" y="0" width="1.2" height="1.2"/><rect x="63" y="0" width="1.2" height="1.2"/><rect x="66" y="0" width="1.2" height="1.2"/><rect x="69" y="0" width="1.2" height="1.2"/><rect x="72" y="0" width="1.2" height="1.2"/><rect x="75" y="0" width="1.2" height="1.2"/><rect x="78" y="0" width="1.2" height="1.2"/><rect x="81" y="0" width="1.2" height="1.2"/><rect x="84" y="0" width="1.2" height="1.2"/><rect x="87" y="0" width="1.2" height="1.2"/><rect x="90" y="0" width="1.2" height="1.2"/><rect x="93" y="0" width="1.2" height="1.2"/><rect x="96" y="0" width="1.2" height="1.2"/><rect x="99" y="0" width="1.2" height="1.2"/><rect x="102" y="0" width="1.2" height="1.2"/><rect x="105" y="0" width="1.2" height="1.2"/><rect x="108" y="0" width="1.2" height="1.2"/><rect x="111" y="0" width="1.2" height="1.2"/><rect x="114" y="0" width="1.2" height="1.2"/><rect x="117" y="0" width="1.2" height="1.2"/><rect x="120" y="0" width="1.2" height="1.2"/><rect x="123" y="0" width="1.2" height="1.2"/><rect x="126" y="0" width="1.2" height="1.2"/><rect x="129" y="0" width="1.2" height="1.2"/><rect x="132" y="0" width="1.2" height="1.2"/><rect x="135" y="0" width="1.2" height="1.2"/><rect x="138" y="0" width="1.2" height="1.2"/><rect x="141" y="0" width="1.2" height="1.2"/><rect x="144" y="0" width="1.2" height="1.2"/><rect x="147" y="0" width="1.2" height="1.2"/><rect x="150" y="0" width="1.2" height="1.2"/><rect x="153" y="0" width="1.2" height="1.2"/><rect x="156" y="0" width="1.2" height="1.2"/><rect x="159" y="0" width="1.2" height="1.2"/></g></svg>
<svg style="left:476px;top:455px" width="9" height="6" viewBox="0 0 9 6" ><path d="M1.4 1.3L4.5 4.4L7.6 1.3" fill="none" stroke="#000" stroke-width="1.5"/></svg>
<svg style="left:649px;top:455px" width="9" height="6" viewBox="0 0 9 6" ><path d="M1.4 1.3L4.5 4.4L7.6 1.3" fill="none" stroke="#000" stroke-width="1.5"/></svg>
<div class="abs" style="left:244px;top:485px;width:643px;height:251px;border:1px solid #d9d9d9;background:#fff;box-shadow:1px 1px 0 #ececec"></div>
<div class="abs" style="left:304px;top:467px;width:109px;height:19px;border:1px solid #d9d9d9;background:#f0f0f0"></div><div class="t" style="left:308px;top:470px;;letter-spacing:0.055px">Betroffene Produkte</div>
<div class="abs" style="left:412px;top:467px;width:98px;height:19px;border:1px solid #d9d9d9;background:#f0f0f0"></div><div class="t" style="left:418.2px;top:470px;;letter-spacing:0.031px">Betroffene Clients</div>
<div class="abs" style="left:244px;top:465px;width:61px;height:21px;border:1px solid #d9d9d9;border-bottom:none;background:#fff"></div><div class="t" style="left:251.5px;top:468px;;letter-spacing:-0.279px">Allgemein</div>
<div class="t" style="left:257.5px;top:502px;;letter-spacing:0.024px">Anrede:</div>
<div class="abs fld" style="left:302px;top:499px;width:573px;height:21px;"><div class="t" style="left:1.5px;top:2px;letter-spacing:-0.108px">Vulnerability in cURL/libcurl since 7.9.1 up to 8.3.0 (CVE-2023-38546)</div></div>
<div class="t" style="left:257.5px;top:529px;;letter-spacing:-0.362px">CVE ID:</div>
<div class="abs fld" style="left:302px;top:526px;width:132px;height:21px;"><div class="t" style="left:1.5px;top:2px;letter-spacing:-0.258px">CVE-2023-38546</div></div>
<div class="t" style="left:439.5px;top:529px;;letter-spacing:-0.081px">Schweregrad:</div>
<div class="abs fld" style="left:512px;top:526px;width:133px;height:21px;"><div class="t" style="left:1.2999999999999545px;top:2px;letter-spacing:-0.263px">Low</div></div>
<div class="t" style="left:650.5px;top:529px;;letter-spacing:-0.284px">CVSS Bewertung:</div>
<div class="abs fld" style="left:740px;top:526px;width:135px;height:21px;"><div class="t" style="left:1.5px;top:2px;letter-spacing:-0.466px">3,7</div></div>
<div class="t" style="left:257.5px;top:552.5px;;letter-spacing:-0.187px">Beschreibung:</div>
<div class="abs fld" style="left:258px;top:571px;width:617px;height:28px"><div class="abs" style="left:1px;top:1px;width:613px;height:24px;overflow:hidden"><div class="t" style="left:1.5px;top:0.5px;letter-spacing:-0.084px">This flaw allows an attacker to intentionally inject cookies into a running program using libcurl, if the specific series of conditions</div><div class="t" style="left:1.5px;top:13.5px;letter-spacing:-0.025px">are met. libcurl performs transfers. In its API, an application creates "easy handles" that are the individual handles for single</div></div></div>
<div class="t" style="left:257.5px;top:604.5px;;letter-spacing:-0.039px">Weiterführende Links:</div>
<div class="abs fld" style="left:258px;top:623px;width:617px;height:100px;border-color:#7a8290"><span class="t" style="left:2.5px;top:0.5px;color:#0a78d6;text-decoration:underline;text-underline-offset:0.5px;text-decoration-thickness:1px;letter-spacing:0.077px">http://curl.haxx.se/docs/CVE-2023-38546.html</span></div>
</body>
</html>
